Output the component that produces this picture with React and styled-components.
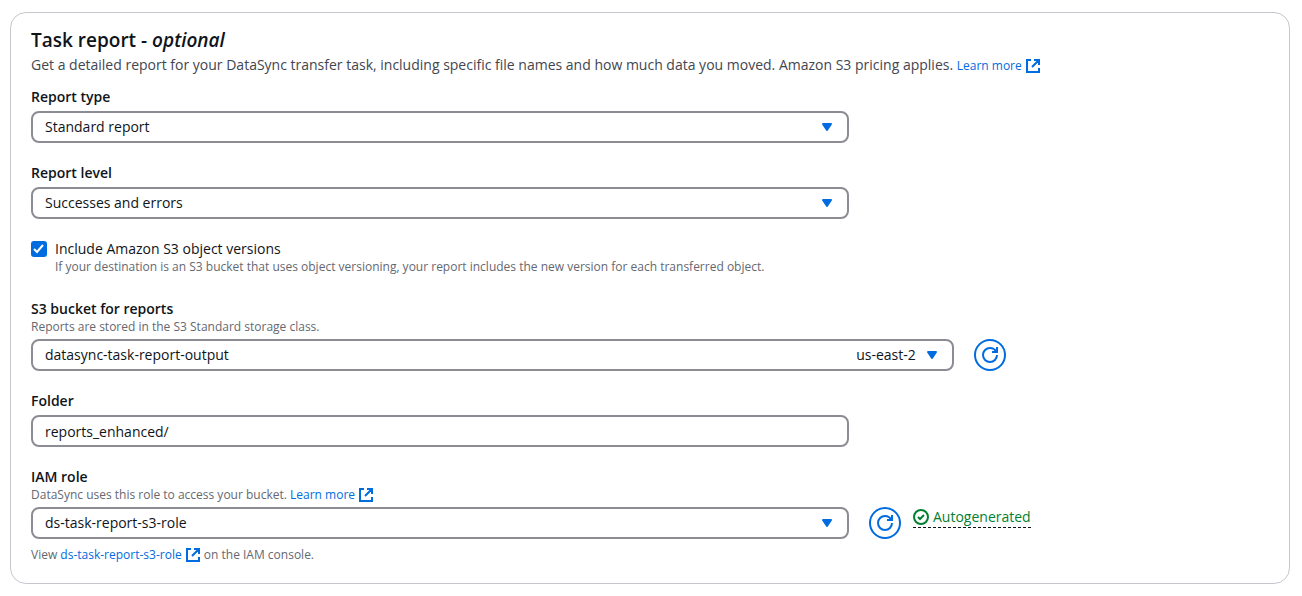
import React, {useState} from 'react';
import styled, {createGlobalStyle} from 'styled-components';

const GlobalStyle = createGlobalStyle`
  * {
    box-sizing: border-box;
  }

  body {
    margin: 0;
    padding: 12px 12px 12px 10px;
    background: #ffffff;
    color: #0f141a;
    font-family: "Open Sans", "Noto Sans", sans-serif;
    font-size: 14px;
    line-height: 20px;
  }
`

const Card = styled.section`
  display: flex;
  flex-direction: column;
  gap: 12px;
  padding: 15px 21px 20px 20px;
  border: 1px solid #c6c6cd;
  border-radius: 16px;
`

const Title = styled.h2`
  margin: 0;
  font-size: 19px;
  line-height: 24px;
  font-weight: 600;
`

const Intro = styled.p`
  margin: 3px 0 0;
  color: #424650;
  line-height: 19px;
`

const Fields = styled.div`
  display: flex;
  flex-direction: column;
  gap: 20px;
`

const Field = styled.div`
  display: flex;
  flex-direction: column;
`

const Label = styled.label`
  align-self: flex-start;
  font-weight: 600;
`

const Hint = styled.p`
  margin: 0;
  color: #656871;
  font-size: 12px;
  line-height: 16px;
`

const FooterHint = styled(Hint)`
  margin-top: 8px;
`

const ControlRow = styled.div`
  display: grid;
  grid-template-columns: repeat(12, minmax(0, 1fr));
  column-gap: 20px;
  margin-top: 4px;
`

const Control = styled.div`
  grid-column: span ${props => props.$span};
  display: grid;
`

const Actions = styled.div`
  grid-column: span ${props => props.$span};
  display: flex;
  align-items: flex-start;
  gap: 12px;
`

const TextInput = styled.input`
  grid-area: 1 / 1;
  width: 100%;
  height: 32px;
  margin: 0;
  padding: 0 12px;
  border: 2px solid #8c8c94;
  border-radius: 8px;
  background: #ffffff;
  color: #0f141a;
  font: inherit;
`

const SelectInput = styled(TextInput)`
  appearance: none;
  cursor: pointer;
`

const SelectEnd = styled.span`
  grid-area: 1 / 1;
  justify-self: end;
  align-self: center;
  display: flex;
  align-items: center;
  gap: 8px;
  margin-right: 14px;
  pointer-events: none;
`

const CheckRow = styled.div`
  display: flex;
  gap: 8px;
  padding-bottom: 4px;
`

const CheckBox = styled.span`
  display: grid;
  width: 16px;
  height: 16px;
  margin-top: 2px;

  input {
    grid-area: 1 / 1;
    appearance: none;
    width: 16px;
    height: 16px;
    margin: 0;
    border: 2px solid #8c8c94;
    border-radius: 3px;
    cursor: pointer;
  }

  input:checked {
    border-color: #006ce0;
    background: #006ce0;
  }

  svg {
    grid-area: 1 / 1;
    pointer-events: none;
  }
`

const CheckText = styled.div`
  display: flex;
  flex-direction: column;
`

const Link = styled.a`
  color: #006ce0;
  font-size: 12px;
  text-decoration: none;

  svg {
    margin-left: 3px;
    vertical-align: -4px;
  }
`

const RoundButton = styled.button`
  display: flex;
  align-items: center;
  justify-content: center;
  flex: none;
  width: 32px;
  height: 32px;
  padding: 0;
  border: 2px solid #006ce0;
  border-radius: 50%;
  background: #ffffff;
  color: #006ce0;
  cursor: pointer;
`

const Status = styled.button`
  display: flex;
  align-items: center;
  gap: 4px;
  padding: 0;
  border: 0;
  border-bottom: 1px dashed #0f141a;
  background: none;
  color: #00802f;
  font: inherit;
  cursor: pointer;
`

const ExternalIcon = () => (
  <svg width="16" height="16" viewBox="0 0 16 16" fill="none" stroke="currentColor" strokeWidth="2" aria-hidden="true">
    <path d="M9 2h5v5M7 9l7-7M6 2H2v12h12v-4" />
  </svg>
)

const CaretIcon = () => (
  <svg width="16" height="16" viewBox="0 0 16 16" fill="#006ce0" stroke="#006ce0" strokeWidth="2" strokeLinejoin="round" aria-hidden="true">
    <path d="M4 5h8l-4 6-4-6z" />
  </svg>
)

const RefreshIcon = () => (
  <svg width="16" height="16" viewBox="0 0 16 16" fill="none" stroke="currentColor" strokeWidth="2" aria-hidden="true">
    <path d="M15 8c0 3.87-3.13 7-7 7s-7-3.13-7-7 3.13-7 7-7c2.79 0 5.2 1.63 6.33 4M15 0v5h-5" />
  </svg>
)

const SuccessIcon = () => (
  <svg width="16" height="16" viewBox="0 0 16 16" fill="none" stroke="currentColor" strokeWidth="2" aria-hidden="true">
    <circle cx="8" cy="8" r="7" />
    <path d="m5 8 2 2 4-4" />
  </svg>
)

const Select = ({id, options, span, region}) => (
  <Control $span={span}>
    <SelectInput as="select" id={id} defaultValue={options[0]}>
      {options.map(option => <option key={option}>{option}</option>)}
    </SelectInput>
    <SelectEnd>
      {region && <span>{region}</span>}
      <CaretIcon />
    </SelectEnd>
  </Control>
)

const App = () => {
  const [versions, setVersions] = useState(true)
  const [folder, setFolder] = useState('reports_enhanced/')

  return (
    <>
      <GlobalStyle />
      <Card>
        <header>
          <Title>Task report - <em>optional</em></Title>
          <Intro>
            Get a detailed report for your DataSync transfer task, including specific file names and how much data you moved. Amazon S3 pricing applies.{' '}
            <Link href="#pricing">Learn more<ExternalIcon /></Link>
          </Intro>
        </header>

        <Fields>
          <Field>
            <Label htmlFor="report-type">Report type</Label>
            <ControlRow>
              <Select id="report-type" span={8} options={['Standard report', 'Summary only']} />
            </ControlRow>
          </Field>

          <Field>
            <Label htmlFor="report-level">Report level</Label>
            <ControlRow>
              <Select id="report-level" span={8} options={['Successes and errors', 'Errors only']} />
            </ControlRow>
          </Field>

          <CheckRow>
            <CheckBox>
              <input
                type="checkbox"
                id="versions"
                checked={versions}
                onChange={e => setVersions(e.target.checked)}
              />
              {versions && (
                <svg width="16" height="16" viewBox="0 0 16 16" fill="none" stroke="#ffffff" strokeWidth="2" aria-hidden="true">
                  <path d="m3 8 3 3 6-7" />
                </svg>
              )}
            </CheckBox>
            <CheckText>
              <label htmlFor="versions">Include Amazon S3 object versions</label>
              <Hint>If your destination is an S3 bucket that uses object versioning, your report includes the new version for each transferred object.</Hint>
            </CheckText>
          </CheckRow>

          <Field>
            <Label htmlFor="bucket">S3 bucket for reports</Label>
            <Hint>Reports are stored in the S3 Standard storage class.</Hint>
            <ControlRow>
              <Select id="bucket" span={9} options={['datasync-task-report-output']} region="us-east-2" />
              <Actions $span={3}>
                <RoundButton type="button" aria-label="Refresh buckets"><RefreshIcon /></RoundButton>
              </Actions>
            </ControlRow>
          </Field>

          <Field>
            <Label htmlFor="folder">Folder</Label>
            <ControlRow>
              <Control $span={8}>
                <TextInput id="folder" type="text" value={folder} onChange={e => setFolder(e.target.value)} />
              </Control>
            </ControlRow>
          </Field>

          <Field>
            <Label htmlFor="role">IAM role</Label>
            <Hint>
              DataSync uses this role to access your bucket. <Link href="#role-help">Learn more<ExternalIcon /></Link>
            </Hint>
            <ControlRow>
              <Select id="role" span={8} options={['ds-task-report-s3-role']} />
              <Actions $span={4}>
                <RoundButton type="button" aria-label="Refresh roles"><RefreshIcon /></RoundButton>
                <Status type="button"><SuccessIcon />Autogenerated</Status>
              </Actions>
            </ControlRow>
            <FooterHint>
              View <Link href="#role">ds-task-report-s3-role<ExternalIcon /></Link> on the IAM console.
            </FooterHint>
          </Field>
        </Fields>
      </Card>
    </>
  )
}

export default App;
